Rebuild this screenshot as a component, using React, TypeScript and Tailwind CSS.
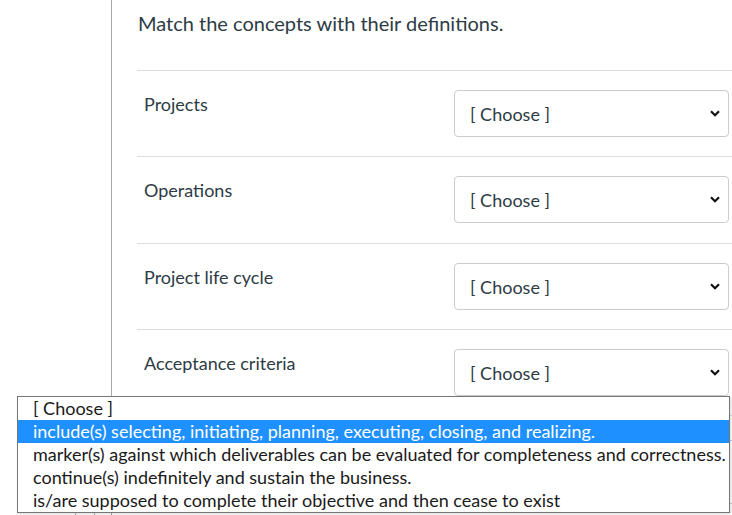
const concepts = ["Projects", "Operations", "Project life cycle", "Acceptance criteria"];

const options = [
  "[ Choose ]",
  "include(s) selecting, initiating, planning, executing, closing, and realizing.",
  "marker(s) against which deliverables can be evaluated for completeness and correctness.",
  "continue(s) indefinitely and sustain the business.",
  "is/are supposed to complete their objective and then cease to exist",
];

function Chevron() {
  return (
    <svg width="10" height="7" viewBox="0 0 10 7" className="shrink-0">
      <path d="M1 1.2 5 5.2 9 1.2" fill="none" stroke="#111" strokeWidth="2.2" />
    </svg>
  );
}

function FakeSelect() {
  return (
    <div className="mr-[3px] mt-[19px] flex h-[47px] w-[275px] items-center justify-between rounded-[4px] border border-[#c7cdd1] bg-white pl-[15px] pr-[8px]">
      <span className="text-[18px] leading-[24px] text-[#2d3b45]">[ Choose ]</span>
      <Chevron />
    </div>
  );
}

export default function App() {
  return (
    <div className="relative h-[515px] w-[732px] overflow-hidden bg-white font-['Lato','Liberation_Sans',sans-serif] text-[#2d3b45]">
      <div className="flex h-full">
        {/* left gutter */}
        <div className="w-[112px] shrink-0 border-r border-[#a8a8a8]">
          <div className="ml-[75px] mt-[509px] h-[20px] w-[20px] border border-[#b0b0b0]" />
        </div>

        <div className="flex-1 pl-[25px]">
          <div className="h-[70px] pl-px pt-[8px] text-[20px] leading-[30px]">
            Match the concepts with their definitions.
          </div>

          {concepts.map((c, i) => (
            <div
              key={c}
              className={`flex items-start justify-between border-t border-[#dddddd] ${
                i === 1 ? "h-[87px]" : "h-[86px]"
              }`}
            >
              <div className="pl-[7px] pt-[21px] text-[18px] leading-[24px]">{c}</div>
              <FakeSelect />
            </div>
          ))}

          <div className="h-[25px] border-t border-[#dddddd]" />
          <div className="h-[63px] border-t border-[#c7cdd1]" />
          <div className="border-t border-[#c7cdd1] pl-[3px] pt-[8px] text-[24px] font-bold leading-[30px]">
            Question 15
          </div>
        </div>
      </div>

      {/* open dropdown list */}
      <div className="absolute left-[17px] top-[396px] w-[713px] border border-[#767676] bg-white shadow-[1px_1px_2px_rgba(0,0,0,0.15)]">
        {options.map((o, i) => (
          <div
            key={o}
            className={`h-[23px] whitespace-nowrap pl-[15px] text-[18px] leading-[23px] ${
              i === 1 ? "bg-[#1e90ff] text-white" : "text-[#1a1a1a]"
            }`}
          >
            {o}
          </div>
        ))}
      </div>
    </div>
  );
}
